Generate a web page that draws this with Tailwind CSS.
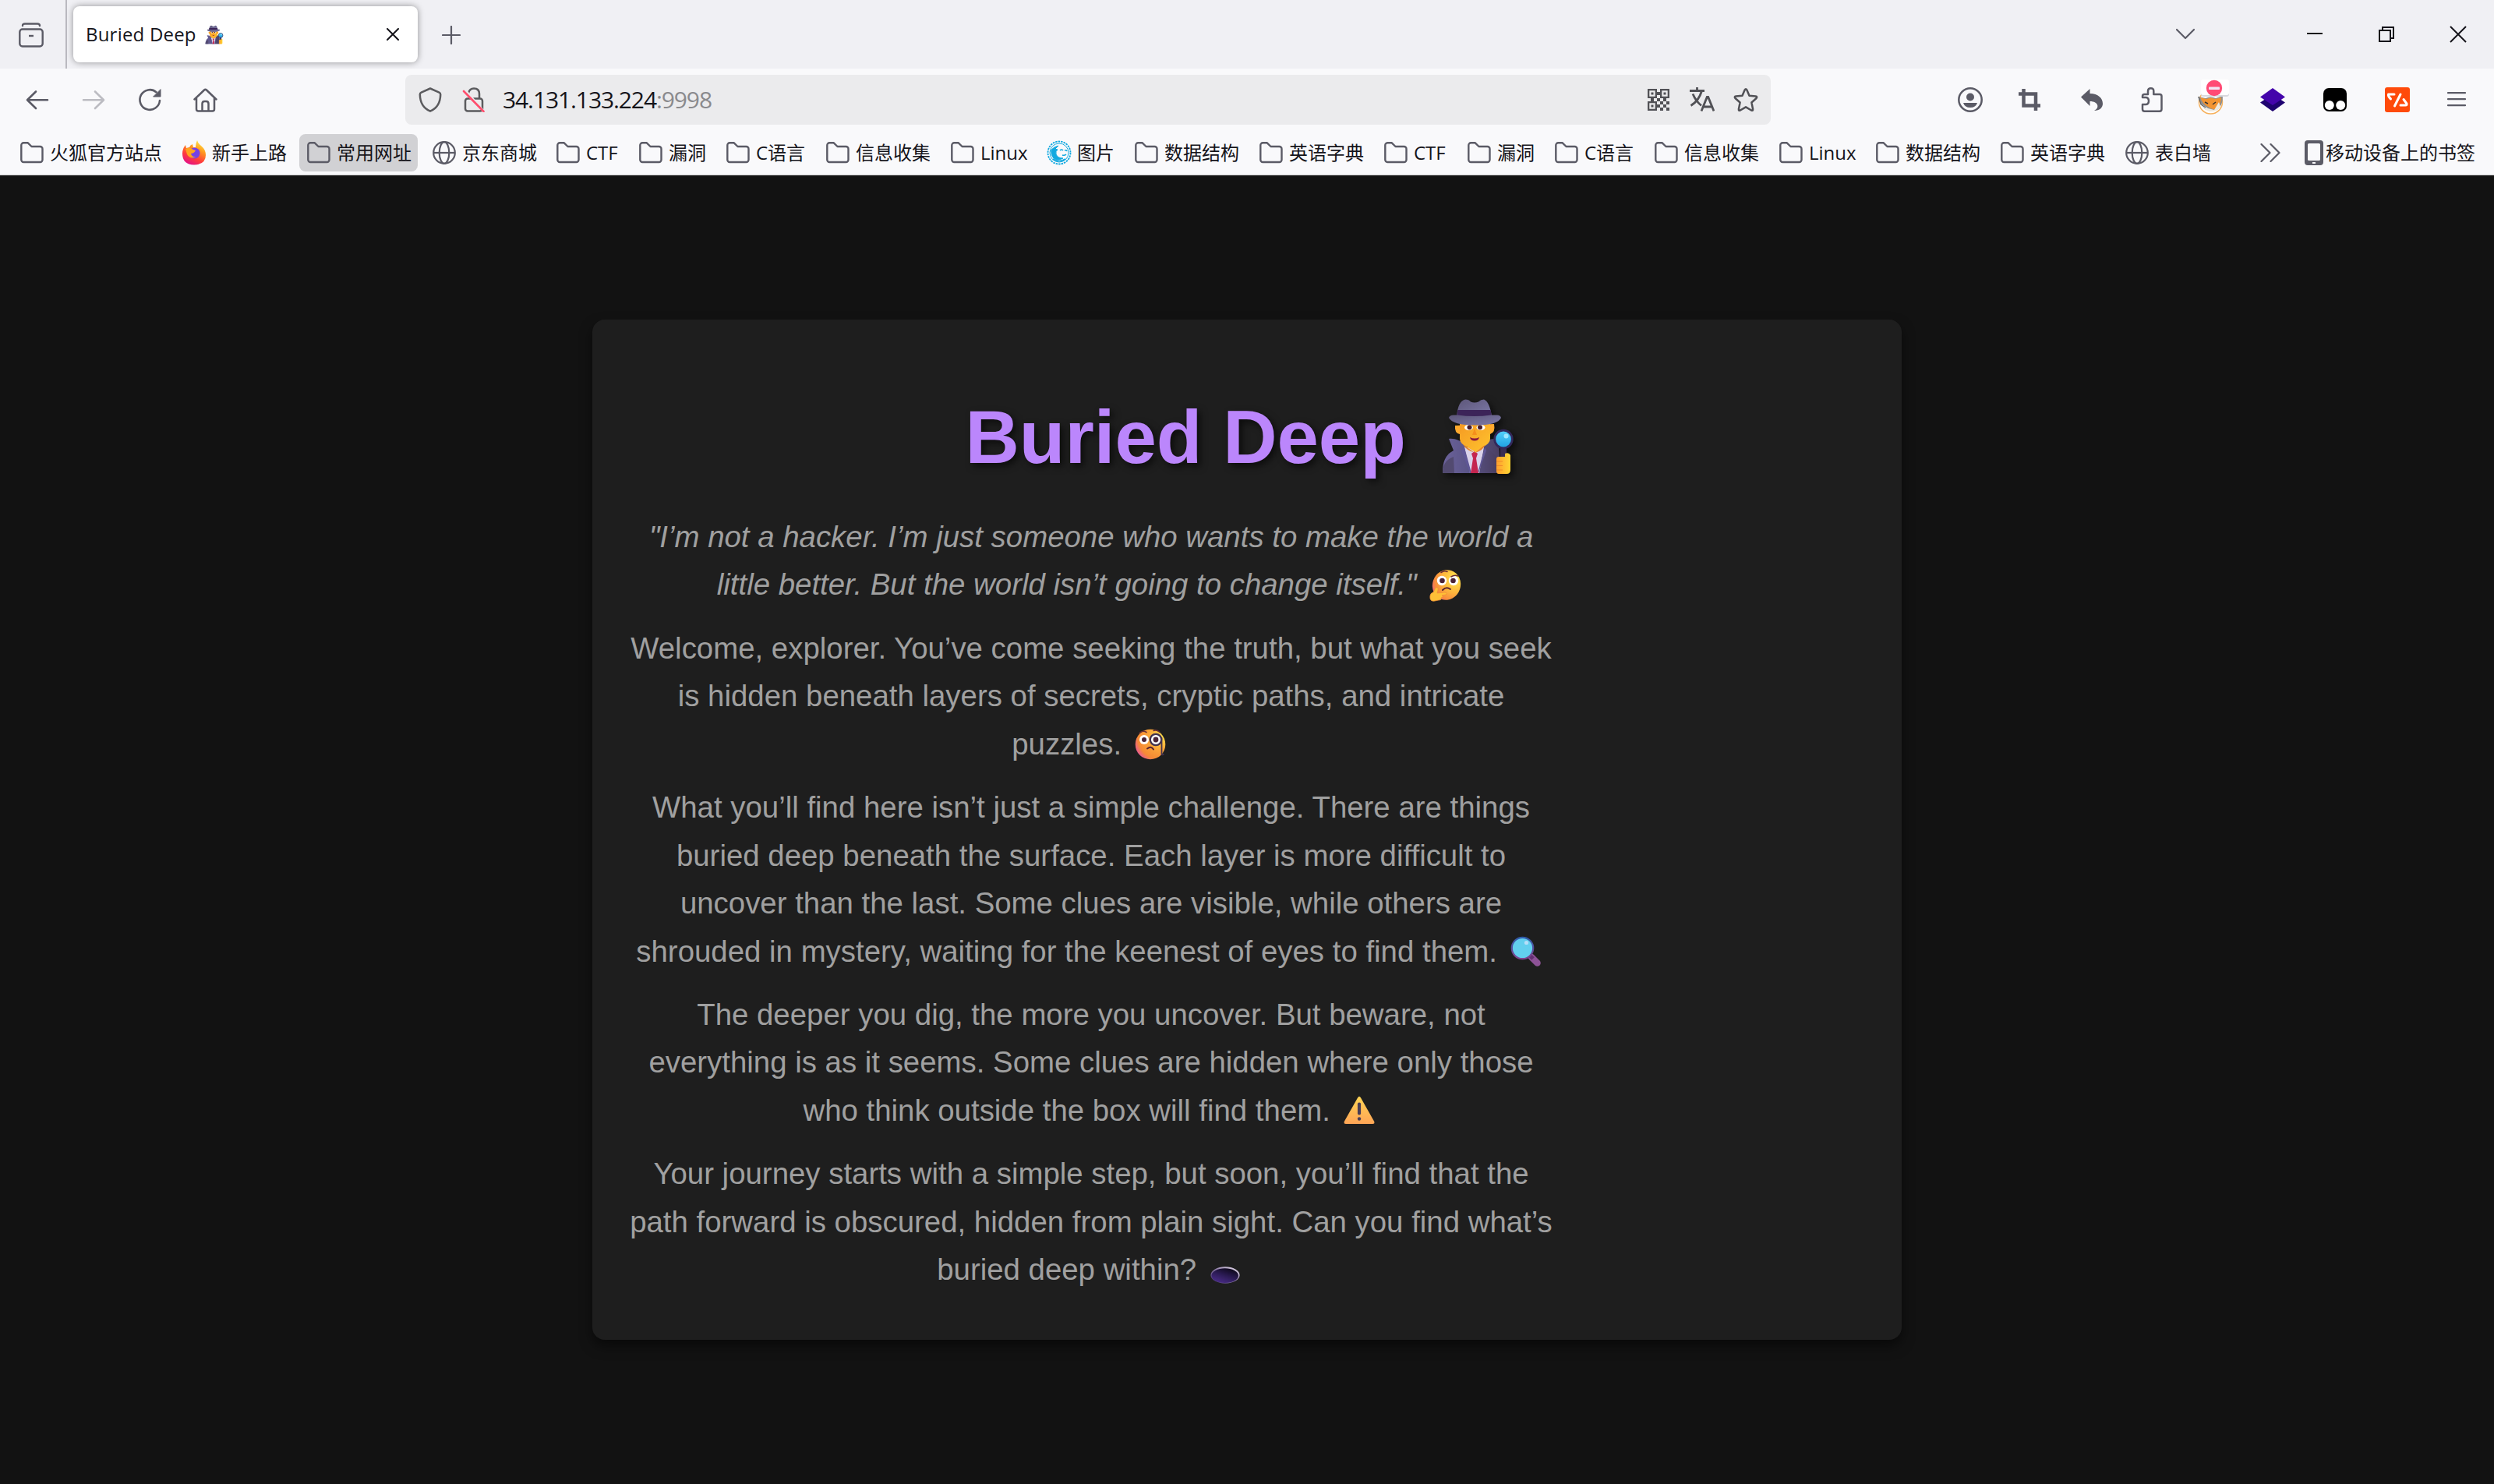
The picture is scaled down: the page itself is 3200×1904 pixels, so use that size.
<!DOCTYPE html>
<html lang="zh-CN">
<head>
<meta charset="utf-8">
<title>Buried Deep</title>
<script src="https://cdn.jsdelivr.net/npm/@tailwindcss/browser@4"></script>
</head>
<body class="w-[3200px] h-[1904px] overflow-hidden bg-[#121212] flex flex-col font-['Open_Sans','Noto_Sans_CJK_SC',sans-serif] text-[#15141a]">

<svg class="absolute w-0 h-0" aria-hidden="true">
  <defs>
    <linearGradient id="gHat" x1="0" y1="0" x2="1" y2="1"><stop offset="0" stop-color="#5d5679"/><stop offset="1" stop-color="#7d7aa8"/></linearGradient>
    <linearGradient id="gFace" x1="0" y1="0" x2="1" y2="1"><stop offset="0" stop-color="#f59a23"/><stop offset="1" stop-color="#ffc32e"/></linearGradient>
    <linearGradient id="gCoat" x1="0" y1="0" x2="1" y2="0"><stop offset="0" stop-color="#6b629a"/><stop offset=".5" stop-color="#5a5487"/><stop offset="1" stop-color="#4a3f62"/></linearGradient>
    <linearGradient id="gHand" x1="0" y1="0" x2="1" y2="0"><stop offset="0" stop-color="#ff9f2e"/><stop offset="1" stop-color="#ffd633"/></linearGradient>
    <linearGradient id="gBlue" x1="0" y1="0" x2="0" y2="1"><stop offset="0" stop-color="#55d2fb"/><stop offset="1" stop-color="#1e9fe0"/></linearGradient>
    <radialGradient id="gSmile" cx=".75" cy=".2" r=".95"><stop offset="0" stop-color="#ffe94f"/><stop offset=".5" stop-color="#fdb53c"/><stop offset=".8" stop-color="#f98a3d"/><stop offset="1" stop-color="#ef5f8a"/></radialGradient>
    <radialGradient id="gSmile2" cx=".85" cy=".25" r=".95"><stop offset="0" stop-color="#ffe04a"/><stop offset=".45" stop-color="#fba53a"/><stop offset=".8" stop-color="#f58a35"/><stop offset="1" stop-color="#e8579a"/></radialGradient>
    <linearGradient id="gRim" x1="0" y1="0" x2="0" y2="1"><stop offset="0" stop-color="#2f5cab"/><stop offset="1" stop-color="#80438d"/></linearGradient>
    <linearGradient id="gWarn" x1="0" y1="0" x2="0" y2="1"><stop offset="0" stop-color="#ffd454"/><stop offset="1" stop-color="#ffa556"/></linearGradient>
    <linearGradient id="gHole" x1=".2" y1="1" x2=".8" y2="0"><stop offset="0" stop-color="#4c2d8c"/><stop offset=".5" stop-color="#2c1b55"/><stop offset="1" stop-color="#0a0614"/></linearGradient>
    <linearGradient id="gHoleRim" x1="0" y1="1" x2="1" y2="0"><stop offset="0" stop-color="#3d2a66"/><stop offset=".5" stop-color="#8d7ba6"/><stop offset="1" stop-color="#f0e8f5"/></linearGradient>
    <linearGradient id="gFox" x1=".8" y1="0" x2=".3" y2="1"><stop offset="0" stop-color="#fff44f"/><stop offset=".35" stop-color="#ff9a1f"/><stop offset=".7" stop-color="#ff3b3b"/><stop offset="1" stop-color="#e3108a"/></linearGradient>

    <symbol id="detective" viewBox="0 0 131 108">
      <path d="M20 101c0-14 3-23 14-29l-6-15c7-1 15 2 22 8l11 36zM61 101l10-36c5-5 9-8 15-8 5 3 7 10 7 20v24z" fill="url(#gCoat)"/>
      <path d="M20 101h69V80l-12-12H42L28 76z" fill="url(#gCoat)"/>
      <path d="M34 80l1 21h-15c0-9 3-17 14-21z" fill="#524a70"/>
      <path d="M48 68h25l-6 33H55z" fill="#d9d2ea"/>
      <path d="M48 68l-4 4 11 29h2zM74 68l2 4-10 29h-1z" fill="#5f5796"/>
      <path d="M57 76l4-3 4 3-2 6 3 19H56l3-19z" fill="#c4254f"/>
      <path d="M36 40q-1 10 6 11h39q7-2 5-13z" fill="#ffa92e"/>
      <path d="M42 36h39v21q0 6-10 11l-9 6-10-6q-10-5-10-11z" fill="url(#gFace)"/>
      <path d="M46 64l15 11 13-10q-1 6-12 10-12-3-16-11z" fill="#e8852a"/>
      <ellipse cx="53.500" cy="42.500" rx="5.500" ry="3.500" fill="#fff"/><ellipse cx="69" cy="42.500" rx="5.500" ry="3.500" fill="#fff"/>
      <circle cx="54.500" cy="42.300" r="3" fill="#4a1f2a"/><circle cx="68" cy="42.300" r="3" fill="#4a1f2a"/>
      <path d="M61 44l-3 8h6z" fill="#f58f1c"/>
      <path d="M55 55q6 3 12 0-1 4.500-6 4.500T55 55z" fill="#8d1a3a"/>
      <path d="M38 28Q40 8 49 6.500q5 0 7 3 5 2 10 0 3-3 7-3Q80 9 83 28z" fill="url(#gHat)"/>
      <path d="M39.500 20h42l1.500 8H38z" fill="#3c2459"/>
      <path d="M28 30q1-3.500 6-3.500l5 0q22 3 43 0h8q4 0 5 3.500-4 9.500-33 9.500T28 30z" fill="url(#gHat)"/>
      <path d="M94 68h8v16h-8z" fill="#3a2c52"/>
      <circle cx="98" cy="57.500" r="11.300" fill="url(#gBlue)" stroke="#33285a" stroke-width="2.800"/>
      <circle cx="101.500" cy="53.500" r="3" fill="#9be6ff"/>
      <path d="M89 83q0-3 3-3h8v-4q5-2 7 2v19q0 5-5 5h-10q-3 0-3-4z" fill="url(#gHand)"/>
      <path d="M89 86h8M89 91.500h8M89 97h8" stroke="#f08a2a" stroke-width="1.200"/>
    </symbol>
    <symbol id="folder" viewBox="0 0 32 32"><path d="M2.300 6.500A3 3 0 0 1 5.300 3.300h5.500L15.500 8h11A3 3 0 0 1 29.500 11v14a3 3 0 0 1-3 3H5.300a3 3 0 0 1-3-3z" fill="none" stroke="#5b5b66" stroke-width="2.400" stroke-linejoin="round"/></symbol>
    <symbol id="globe" viewBox="0 0 32 32"><g fill="none" stroke="#5b5b66" stroke-width="2.200"><circle cx="16" cy="16" r="13.800"/><ellipse cx="16" cy="16" rx="6.300" ry="13.800"/><path d="M2.200 16h27.600"/></g></symbol>
  </defs>
</svg>

<header class="h-[225px] shrink-0 bg-[#f9f9fb] border-b border-[#cccccc] flex flex-col">
  <!-- Tab strip -->
  <div class="h-[88px] bg-[#f0f0f4] flex items-center">
    <svg class="w-8 h-8 ml-6 mt-px" viewBox="0 0 32 32" fill="none" stroke="#5b5b66" stroke-width="2.400" stroke-linecap="round"><rect x="1.300" y="8.500" width="29.400" height="22" rx="3.500"/><path d="M5 4Q5 1.500 8 1.500h16Q27 1.500 27 4"/><path d="M13 17h6" stroke-linecap="butt"/></svg>
    <div class="w-0.5 h-full bg-[#bab9c0] ml-7"></div>
    <div class="ml-2 w-[442px] h-[72px] rounded-lg bg-white shadow-[0_0_8px_rgba(0,0,0,0.4)] flex items-center pl-4 pr-6">
      <span class="text-[24px] leading-8 tracking-[0.2px] whitespace-pre">Buried Deep</span>
      <svg class="w-[34px] h-[27px] ml-[6px]" viewBox="0 0 131 108"><use href="#detective"/></svg>
      <svg class="w-4 h-4 ml-auto" viewBox="0 0 16 16" stroke="#15141a" stroke-width="2" stroke-linecap="round"><path d="M1 1l14 14M15 1L1 15"/></svg>
    </div>
    <svg class="w-6 h-6 ml-[31px] mt-0.5" viewBox="0 0 24 24" stroke="#5b5b66" stroke-width="2.200" stroke-linecap="round"><path d="M12 1v22M1 12h22"/></svg>
    <svg class="w-6 h-4 ml-auto" viewBox="0 0 24 16" fill="none" stroke="#5b5b66" stroke-width="2.200" stroke-linecap="round" stroke-linejoin="round"><path d="M1 2l11 11L23 2"/></svg>
    <svg class="w-5 h-5 ml-36" viewBox="0 0 20 20" stroke="#15141a" stroke-width="2"><path d="M0 9h20"/></svg>
    <svg class="w-5 h-5 ml-[72px]" viewBox="0 0 20 20" fill="none" stroke="#15141a" stroke-width="2"><path d="M1 5h14v14H1zM5 5V1h14v14h-4"/></svg>
    <svg class="w-[22px] h-[22px] ml-[71px] mr-[35px]" viewBox="0 0 22 22" stroke="#15141a" stroke-width="2"><path d="M1 1l20 20M21 1L1 21"/></svg>
  </div>

  <!-- Navigation bar -->
  <div class="h-20 flex items-center pl-8 pr-8">
    <div class="flex gap-10">
      <svg class="w-8 h-8" viewBox="0 0 32 32" fill="none" stroke="#5b5b66" stroke-width="2.600" stroke-linecap="round" stroke-linejoin="round"><path d="M29 16.300H3M14 5.500L3 16.300 14 27"/></svg>
      <svg class="w-8 h-8" viewBox="0 0 32 32" fill="none" stroke="#bcbcc2" stroke-width="2.600" stroke-linecap="round" stroke-linejoin="round"><path d="M3 16.300h26M18 5.500l11 10.800L18 27"/></svg>
      <svg class="w-8 h-8" viewBox="0 0 32 32" fill="none" stroke="#5b5b66" stroke-width="2.600" stroke-linecap="round"><path d="M29 17A12.800 12.800 0 1 1 24.500 6.200"/><path d="M30 3v9h-9z" fill="#5b5b66" stroke-width="1"/></svg>
      <svg class="w-8 h-8" viewBox="0 0 32 32" fill="none" stroke="#5b5b66" stroke-width="2.500" stroke-linecap="round" stroke-linejoin="round"><path d="M1.500 15.500L14 3.500q1.500-1.300 3 0l12.500 12M4 14v14q0 2.500 2.500 2.500h18Q27 30.500 27 28V14M11.500 30V21q0-3 3-3h2q3 0 3 3v9"/></svg>
    </div>
    <div class="ml-60 w-[1752px] h-16 rounded-lg bg-[#ebebed] flex items-center px-4">
      <svg class="w-8 h-8" viewBox="0 0 32 32" fill="none" stroke="#5b5b5e" stroke-width="2.500" stroke-linejoin="round"><path d="M16 1.500l11.500 5.200q1.700.8 1.700 2.600C29 19 25 27 16 30.700 7 27 3 19 2.800 9.300q0-1.800 1.700-2.600z"/></svg>
      <svg class="w-8 h-8 ml-6" viewBox="0 0 32 32" fill="none" stroke-width="2.500" stroke-linecap="round"><path d="M9 7.500Q10.500 1.500 16 1.500q7 0 7 7V14" stroke="#5b5b5e"/><rect x="5" y="14.500" width="22" height="16" rx="3" stroke="#5b5b5e"/><path d="M5 3l25 29" stroke="#ebebed" stroke-width="2"/><path d="M3 5l25.500 26" stroke="#ff4f6e" stroke-width="2.600"/></svg>
      <div class="ml-[21px] text-[30px] leading-10 tracking-[-1.100px]">34.131.133.224<span class="text-[#8a8a8d]">:9998</span></div>
      <div class="ml-auto flex gap-6">
        <svg class="w-8 h-8" viewBox="0 0 32 32" fill="#515156"><path fill-rule="evenodd" d="M2 2h12v12H2zM4.300 4.300v7.400h7.400V4.300zM18 2h12v12H18zM20.300 4.300v7.400h7.400V4.300zM2 18h12v12H2zM4.300 20.300v7.400h7.400v-7.400z"/><path d="M6.500 6.500h3v3h-3zM22.500 6.500h3v3h-3zM6.500 22.500h3v3h-3zM14 6h4v4h-4zM6 14h4v4H6zM14 14h4v4h-4zM22 14h4v4h-4zM18 18h4v4h-4zM26 18h4v4h-4zM14 22h4v4h-4zM22 22h4v4h-4zM18 26h4v4h-4zM26 26h4v4h-4z"/></svg>
        <svg class="w-8 h-8" viewBox="0 0 32 32" fill="none" stroke="#515156" stroke-width="2.800"><path d="M0 4.500h19M9.500 0v4.500M4 8.500Q8 18 15 23.500M15.500 4.500Q12 17 1.500 23.500"/><path d="M15 30.500l7.300-18h1.400l7.300 18M17.500 25h11"/></svg>
        <svg class="w-8 h-8" viewBox="0 0 32 32" fill="none" stroke="#515156" stroke-width="2.500" stroke-linejoin="round"><path d="M14.700 3.300q1.300-2.200 2.600 0l3.200 7.500 8.200.8q2.500.5.900 2.400l-6.200 5.500 1.700 8.500q.2 2.500-2 1.500L16 25.300l-7.100 4.200q-2.200 1-2-1.500l1.700-8.500L2.400 14q-1.600-1.900.9-2.400l8.200-.8z"/></svg>
      </div>
    </div>
    <svg class="w-8 h-8 ml-60" viewBox="0 0 32 32" fill="#5b5b66"><circle cx="16" cy="16" r="14.700" fill="none" stroke="#5b5b66" stroke-width="2.500"/><circle cx="16" cy="12.500" r="5"/><path d="M7 20h18q-2 6-9 6t-9-6z"/></svg>
    <svg class="w-8 h-8 ml-11" viewBox="0 0 32 32" fill="none" stroke="#5b5b66" stroke-width="4.500"><path d="M2 8.500h22v21.500M8.500 2v21.500H30"/></svg>
    <svg class="w-8 h-8 ml-12" viewBox="0 0 32 32" fill="#5b5b66"><path d="M2 12.500L13.500 2v6C24 8 30 14 30 21c0 5-4 9-11 9 7-3 6-12-5.500-12v6z"/></svg>
    <svg class="w-8 h-8 ml-[45px]" viewBox="0 0 32 32" fill="none" stroke="#5b5b66" stroke-width="2.500" stroke-linejoin="round"><path d="M4 13V11.500q0-2.500 2.500-2.500H11V5q0-3.700 3.700-3.700T18.300 5v4H26q2.500 0 2.500 2.500V28q0 2.700-2.500 2.700H6.500Q4 30.700 4 28V22h4.500q3.500-.5 3.500-4.500T8.500 13z"/></svg>
    <!-- Proxy switcher with a blocked badge -->
    <svg class="w-10 h-12 ml-[43px] -mt-2" viewBox="0 0 40 48"><circle cx="16.500" cy="31" r="15" fill="#fff" stroke="#f6b15d" stroke-width="1.500"/><path d="M0 24l10 2q6-3 13 0l9-3q0 12-6 17-8 5-17 0Q3 34 0 24z" fill="#8f8f8f"/><path d="M3 25l8 2q6-3 11 0l8-2q0 10-8 15-4 1-9-3Q6 33 3 25z" fill="#f29432"/><path d="M4 33l9 6 8 2 6-10 2 6q-4 6-12 6T4 33z" fill="#eee9df"/><path d="M9 31l4 2M19 34l4-3" stroke="#333" stroke-width="1.500"/><path d="M1 24l3 10 6 4" fill="none" stroke="#666" stroke-width="1.200"/><rect x="4" y="4" width="36" height="20" rx="3" fill="#d9d9dd"/><rect x="4" y="2" width="36" height="20" rx="3" fill="#fff"/><circle cx="21" cy="13" r="10.200" fill="#ff4a75"/><rect x="14" y="11.500" width="14" height="3.500" rx=".8" fill="#f1e6f5"/></svg>
    <svg class="w-8 h-8 ml-10" viewBox="0 0 32 32"><path d="M0 19.500L16 9l16 10.500L16 31z" fill="#1f0370"/><path d="M0 12.500L16 1l16 11.500L16 23z" fill="#4405ab"/></svg>
    <svg class="w-8 h-8 ml-12" viewBox="0 0 32 32"><rect x="1" y="1" width="30" height="30" rx="7" fill="#000"/><circle cx="8.800" cy="23" r="6" fill="#fff"/><circle cx="23.200" cy="23" r="6" fill="#fff"/></svg>
    <svg class="w-8 h-8 ml-12" viewBox="0 0 32 32"><rect width="32" height="32" rx="3" fill="#ff4a0a"/><path d="M12 9H4.500q-.5 3 3 6M20 9l-7.500 15M24 15.500l4 5.500q.5 2-1.500 2H20" fill="none" stroke="#fff" stroke-width="3" stroke-linecap="round" stroke-linejoin="round"/></svg>
    <svg class="w-8 h-8 ml-11" viewBox="0 0 32 32" stroke="#5b5b66" stroke-width="2.200" stroke-linecap="round"><path d="M5 7.200h22M5 15.200h22M5 23.200h22"/></svg>
  </div>

  <!-- Bookmarks toolbar -->
  <nav class="h-14 flex items-center pl-[15px] text-[24px] leading-8 whitespace-nowrap">
    <div class="w-[208px] h-12 pl-2.5 flex items-center gap-[7px] shrink-0"><svg class="w-8 h-8"><use href="#folder"/></svg>火狐官方站点</div>
    <div class="w-[161px] h-12 pl-2.5 flex items-center gap-[7px] shrink-0">
      <svg class="w-8 h-8" viewBox="0 0 32 32"><path d="M20 0q1 4 5 7 6 5 6 12 0 12-15 12.500Q1 31 1 17q0-6 4-11l1 4 4-1q1-3 4-4l1 4h3q0-5 2-9z" fill="url(#gFox)"/><circle cx="16.500" cy="16.500" r="7" fill="#7542e5"/><path d="M5 11q5-3 10 1l3 1q-2 4-6 4 1 5 7 4-8 4-12-3z" fill="#ffa31f"/></svg>新手上路</div>
    <div class="w-[152px] h-12 pl-2.5 mr-2 flex items-center gap-[7px] shrink-0 rounded-lg bg-[#d1d1d4]"><svg class="w-8 h-8 -ml-px"><use href="#folder"/></svg>常用网址</div>
    <div class="w-[161px] h-12 pl-2.5 flex items-center gap-[7px] shrink-0"><svg class="w-8 h-8"><use href="#globe"/></svg>京东商城</div>
    <div class="w-[106px] h-12 pl-2 flex items-center gap-[7px] shrink-0"><svg class="w-8 h-8"><use href="#folder"/></svg>CTF</div>
    <div class="w-[112px] h-12 pl-2 flex items-center gap-[7px] shrink-0"><svg class="w-8 h-8"><use href="#folder"/></svg>漏洞</div>
    <div class="w-[128px] h-12 pl-2 flex items-center gap-[7px] shrink-0"><svg class="w-8 h-8"><use href="#folder"/></svg>C语言</div>
    <div class="w-[160px] h-12 pl-2 flex items-center gap-[7px] shrink-0"><svg class="w-8 h-8"><use href="#folder"/></svg>信息收集</div>
    <div class="w-[124px] h-12 pl-2 flex items-center gap-[7px] shrink-0"><svg class="w-8 h-8"><use href="#folder"/></svg>Linux</div>
    <div class="w-[112px] h-12 pl-2 flex items-center gap-[7px] shrink-0">
      <svg class="w-8 h-8" viewBox="0 0 32 32" fill="none" stroke="#12a9e0"><circle cx="16" cy="16" r="14.500" stroke-width="1.800" stroke-dasharray="2.500 1"/><circle cx="16" cy="16" r="12" stroke-width="1"/><path d="M6 12q4-4 9-5l-4 4 3 1q-3 2-2 6 2 5 9 5-7 4-12 0Q5 19 6 12z" fill="#12a9e0"/><path d="M17 13q2-2 4 0M23 13q2-1 3 1M20 19q3 1 5-1M8 24q8 5 16 0" stroke-width="1.500"/></svg>图片</div>
    <div class="w-[160px] h-12 pl-2 flex items-center gap-[7px] shrink-0"><svg class="w-8 h-8"><use href="#folder"/></svg>数据结构</div>
    <div class="w-[160px] h-12 pl-2 flex items-center gap-[7px] shrink-0"><svg class="w-8 h-8"><use href="#folder"/></svg>英语字典</div>
    <div class="w-[107px] h-12 pl-2 flex items-center gap-[7px] shrink-0"><svg class="w-8 h-8"><use href="#folder"/></svg>CTF</div>
    <div class="w-[112px] h-12 pl-2 flex items-center gap-[7px] shrink-0"><svg class="w-8 h-8"><use href="#folder"/></svg>漏洞</div>
    <div class="w-[128px] h-12 pl-2 flex items-center gap-[7px] shrink-0"><svg class="w-8 h-8"><use href="#folder"/></svg>C语言</div>
    <div class="w-[160px] h-12 pl-2 flex items-center gap-[7px] shrink-0"><svg class="w-8 h-8"><use href="#folder"/></svg>信息收集</div>
    <div class="w-[124px] h-12 pl-2 flex items-center gap-[7px] shrink-0"><svg class="w-8 h-8"><use href="#folder"/></svg>Linux</div>
    <div class="w-[160px] h-12 pl-2 flex items-center gap-[7px] shrink-0"><svg class="w-8 h-8"><use href="#folder"/></svg>数据结构</div>
    <div class="w-[160px] h-12 pl-2 flex items-center gap-[7px] shrink-0"><svg class="w-8 h-8"><use href="#folder"/></svg>英语字典</div>
    <div class="h-12 pl-2 flex items-center gap-[7px] shrink-0"><svg class="w-8 h-8"><use href="#globe"/></svg>表白墙</div>
    <div class="ml-auto mr-6 flex items-center shrink-0">
      <svg class="w-[26px] h-6" viewBox="0 0 26 24" fill="none" stroke="#5b5b66" stroke-width="2.200" stroke-linecap="round" stroke-linejoin="round"><path d="M1.500 1l11 11-11 11M13.500 1l11 11-11 11"/></svg>
      <svg class="w-6 h-8 ml-[31px]" viewBox="0 0 24 32"><path fill-rule="evenodd" d="M4 0h16q4 0 4 4v24q0 4-4 4H4q-4 0-4-4V4q0-4 4-4zM5.500 4Q4 4 4 5.500v19Q4 26 5.500 26h13q1.500 0 1.500-1.500v-19Q20 4 18.500 4zM10 28v2h4v-2z" fill="#5b5b66"/></svg>
      <span class="ml-[3px]">移动设备上的书签</span>
    </div>
  </nav>
</header>

<main class="mt-[185px] mx-auto w-[1680px] h-[1309px] shrink-0 rounded-2xl bg-[#1e1e1e] shadow-[0_8px_16px_rgba(0,0,0,0.5)] px-10 pt-[74px] font-['Liberation_Sans',Arial,sans-serif]">
  <h1 class="h-[154px] leading-[154px] text-[96px] font-bold text-[#bb86fc] text-center whitespace-nowrap [text-shadow:4px_4px_10px_rgba(0,0,0,0.6)]">Buried Deep <svg class="inline-block w-[131px] h-[108px] align-[-20px] drop-shadow-[4px_4px_5px_rgba(0,0,0,0.6)]"><use href="#detective"/></svg></h1>
  <div class="mt-5 w-[1200px] flex flex-col gap-5 text-[38.4px] leading-[61.44px] text-[#a0a0a0] text-center whitespace-nowrap">
    <p class="italic">"I’m not a hacker. I’m just someone who wants to make the world a<br>little better. But the world isn’t going to change itself." <svg class="inline-block w-[52px] h-[52px] align-[-13.500px]" viewBox="0 0 52 52"><ellipse cx="28" cy="25.500" rx="18" ry="19.500" transform="rotate(18 28 25.500)" fill="url(#gSmile)"/><circle cx="22" cy="20" r="6.200" fill="#fff"/><circle cx="37" cy="20" r="6.200" fill="#fff"/><circle cx="22.500" cy="20" r="3.300" fill="#4a2437"/><circle cx="36.500" cy="20" r="3.300" fill="#4a2437"/><path d="M21 9.500q4-3 8-1M34 15q4-3 9-1" fill="none" stroke="#6b2f35" stroke-width="1.600" stroke-linecap="round"/><path d="M23 32q5-5 10-1" fill="none" stroke="#5a2430" stroke-width="2" stroke-linecap="round"/><path d="M7 43q-1-7 4-8l3-6q4-1 3 3l-1 4 10-1q4 1 1 3l-5 1q3 2-1 3 1 3-3 3l-5 1q-5 1-6-3z" fill="#ffc037" stroke="#f08c36" stroke-width=".7"/></svg></p>
    <p>Welcome, explorer. You’ve come seeking the truth, but what you seek<br>is hidden beneath layers of secrets, cryptic paths, and intricate<br>puzzles. <svg class="inline-block w-[52px] h-[52px] align-[-13.500px]" viewBox="0 0 52 52"><circle cx="26" cy="26" r="19.300" fill="url(#gSmile2)"/><circle cx="18" cy="20" r="6" fill="#fff"/><circle cx="18" cy="20" r="3" fill="#4a2437"/><path d="M12 11.500q4-4 9-1M30 8.500q4-2 8 2" fill="none" stroke="#6b2f35" stroke-width="1.600" stroke-linecap="round"/><circle cx="33" cy="20" r="7.200" fill="#fff" stroke="#43334f" stroke-width="2.300"/><circle cx="33" cy="20" r="3.400" fill="#4a2437"/><path d="M40.500 17.500V39q2 1 2.500-1" fill="none" stroke="#43334f" stroke-width="1.800"/><path d="M22 31.500q5-4 8 1" fill="none" stroke="#5a2430" stroke-width="2" stroke-linecap="round"/></svg></p>
    <p>What you’ll find here isn’t just a simple challenge. There are things<br>buried deep beneath the surface. Each layer is more difficult to<br>uncover than the last. Some clues are visible, while others are<br>shrouded in mystery, waiting for the keenest of eyes to find them. <svg class="inline-block w-[52px] h-[52px] align-[-13.500px]" viewBox="0 0 52 52"><path d="M33 33l7.500 7.500" stroke="#8d5296" stroke-width="8.500" stroke-linecap="round"/><path d="M30 30l5 5" stroke="#653074" stroke-width="5"/><circle cx="21.500" cy="21.500" r="13.700" fill="#62cfee" stroke="url(#gRim)" stroke-width="2.200"/><circle cx="26.500" cy="14.500" r="2.600" fill="#b5def8"/></svg></p>
    <p>The deeper you dig, the more you uncover. But beware, not<br>everything is as it seems. Some clues are hidden where only those<br>who think outside the box will find them. <svg class="inline-block w-[52px] h-[52px] align-[-13.500px]" viewBox="0 0 52 52"><path d="M24 9.500q2-3.500 4 0l17 30q1.500 3.500-2 3.500H9q-3.500 0-2-3.500z" fill="url(#gWarn)"/><path d="M26 17.500v12" stroke="#4a3d55" stroke-width="4.200" stroke-linecap="round"/><circle cx="26" cy="36.500" r="2.200" fill="#4a3d55"/></svg></p>
    <p>Your journey starts with a simple step, but soon, you’ll find that the<br>path forward is obscured, hidden from plain sight. Can you find what’s<br>buried deep within? <svg class="inline-block w-[52px] h-[52px] align-[-13.500px]" viewBox="0 0 52 52"><ellipse cx="26" cy="32" rx="18.600" ry="10.700" fill="url(#gHoleRim)"/><ellipse cx="25.700" cy="32.700" rx="17.200" ry="9.400" fill="url(#gHole)"/></svg></p>
  </div>
</main>
</body>
</html>
